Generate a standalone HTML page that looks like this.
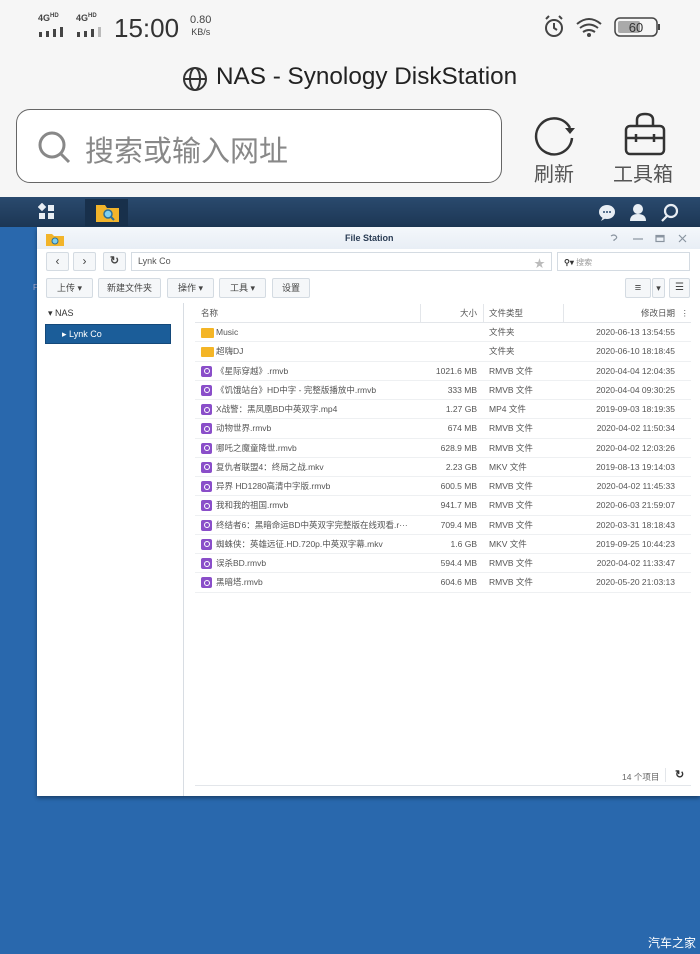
<!DOCTYPE html>
<html><head><meta charset="utf-8"><style>
*{margin:0;padding:0;box-sizing:border-box}
body{width:700px;height:954px;overflow:hidden;background:#f6f6f6;font-family:"Liberation Sans","Noto Sans CJK SC",sans-serif;position:relative}
.a{position:absolute}
.btn{position:absolute;top:278px;height:20px;border:1px solid #d4dbe2;border-radius:2px;background:#f5f7f9;font-size:9px;color:#444;text-align:center;line-height:18px}
.row{position:absolute;left:195px;width:496px;height:19.25px;border-bottom:1px solid #eef0f2;font-size:8.5px;color:#555;line-height:19px;white-space:nowrap}
.row span{position:absolute}
.ic{left:6px;top:4px;width:11px;height:11px;background:#8a4ec9;border-radius:2px}
.ic::after{content:"";position:absolute;left:2.5px;top:2.5px;width:4px;height:4px;border:1px solid #fff;border-radius:50%}
.fd{left:6px;top:5px;width:13px;height:10px;background:#f4b526;border-radius:1px}
</style></head><body>
<div class="a" style="left:38px;top:13px;font-size:9px;font-weight:bold;color:#444">4G<sup style="font-size:6px">HD</sup></div>
<div class="a" style="left:76px;top:13px;font-size:9px;font-weight:bold;color:#444">4G<sup style="font-size:6px">HD</sup></div>
<svg class="a" style="left:38px;top:26px" width="70" height="12"><g fill="#444"><rect x="1" y="6" width="3" height="5"/><rect x="8" y="5" width="3" height="6"/><rect x="15" y="3" width="3" height="8"/><rect x="22" y="1" width="3" height="10"/><rect x="39" y="6" width="3" height="5"/><rect x="46" y="5" width="3" height="6"/><rect x="53" y="3" width="3" height="8"/><rect x="60" y="1" width="3" height="10" fill="#bbb"/></g></svg>
<div class="a" style="left:114px;top:13px;font-size:26px;color:#333">15:00</div>
<div class="a" style="left:190px;top:14px;font-size:11px;color:#444;line-height:12px;text-align:center">0.80<br><span style="font-size:9px">KB/s</span></div>
<svg class="a" style="left:542px;top:14px" width="120" height="26"><g fill="none" stroke="#444" stroke-width="2"><circle cx="12" cy="14" r="8"/><path d="M12 9v5l3 2M4 5l3-3M20 5l-3-3"/><path d="M35 10q12-10 24 0M38 14q9-7 18 0M41 18q6-4 12 0"/></g><circle cx="47" cy="21" r="2" fill="#444"/><rect x="73" y="4" width="42" height="18" rx="5" fill="none" stroke="#444" stroke-width="1.5"/><rect x="76" y="7" width="22" height="12" rx="2" fill="#aaa"/><rect x="116" y="10" width="2" height="6" fill="#444"/><text x="94" y="18" font-size="13" fill="#333" text-anchor="middle" font-family="Liberation Sans">60</text></svg>
<svg class="a" style="left:181px;top:65px" width="28" height="28"><g fill="none" stroke="#333" stroke-width="2"><circle cx="14" cy="14" r="11"/><ellipse cx="14" cy="14" rx="5" ry="11"/><path d="M3 14h22"/></g></svg>
<div class="a" style="left:216px;top:63px;font-size:24.3px;color:#222">NAS - Synology DiskStation</div>
<div class="a" style="left:16px;top:109px;width:486px;height:74px;border:1px solid #666;border-radius:14px;background:#fff"></div>
<svg class="a" style="left:36px;top:129px" width="36" height="36"><g fill="none" stroke="#888" stroke-width="3"><circle cx="16" cy="16" r="12"/><path d="M25 25l8 8"/></g></svg>
<div class="a" style="left:85px;top:128px;font-size:29px;color:#888">搜索或输入网址</div>
<svg class="a" style="left:532px;top:112px" width="48" height="44"><g fill="none" stroke="#333" stroke-width="2.5"><path d="M38 16A18 18 0 1 0 40 26"/></g><path d="M33 16l5 6 5-6z" fill="#333"/></svg>
<div class="a" style="left:534px;top:158px;font-size:20px;color:#555">刷新</div>
<svg class="a" style="left:620px;top:110px" width="50" height="48"><g fill="none" stroke="#333" stroke-width="2.5"><rect x="6" y="16" width="38" height="28" rx="4"/><path d="M17 16V10q0-6 8-6t8 6v6M6 28h38M16 24v8M34 24v8"/></g></svg>
<div class="a" style="left:613px;top:158px;font-size:20px;color:#555">工具箱</div>
<div class="a" style="left:0;top:197px;width:700px;height:757px;background:#2968ad"></div>
<div class="a" style="left:0;top:197px;width:700px;height:30px;background:linear-gradient(#2a4a6e,#1c3654)"></div>
<div class="a" style="left:85px;top:199px;width:43px;height:27px;background:#18304b"></div>
<svg class="a" style="left:38px;top:203px" width="18" height="18"><g fill="#e8eef4"><rect x="1" y="1" width="6" height="6" transform="rotate(45 4 4)"/><rect x="10" y="2" width="6" height="6"/><rect x="1" y="10" width="6" height="6"/><rect x="10" y="10" width="6" height="6"/></g></svg>
<svg class="a" style="left:95px;top:202px" width="26" height="21"><path d="M1 3h9l2 3h12v14H1z" fill="#f2b42a"/><circle cx="13" cy="12" r="4" fill="#7fd0f0" stroke="#2b6f99" stroke-width="1.5"/><path d="M16 15l3 3" stroke="#2b6f99" stroke-width="2"/></svg>
<svg class="a" style="left:597px;top:203px" width="84" height="20"><ellipse cx="10" cy="9" rx="8" ry="7" fill="#e8eef4"/><path d="M6 14l-2 4 5-3z" fill="#e8eef4"/><g fill="#2a4a6e"><circle cx="7" cy="9" r="1"/><circle cx="10" cy="9" r="1"/><circle cx="13" cy="9" r="1"/></g><circle cx="41" cy="6" r="5" fill="#e8eef4"/><path d="M33 18q0-7 8-7t8 7z" fill="#e8eef4"/><g fill="none" stroke="#e8eef4" stroke-width="2.2"><circle cx="74" cy="8" r="6"/><path d="M70 13l-5 5"/></g></svg>
<div class="a" style="left:33px;top:283px;font-size:8px;color:#aac">F</div>
<div class="a" style="left:37px;top:227px;width:663px;height:569px;background:#fff;box-shadow:0 2px 4px rgba(0,0,0,.4)"></div>
<div class="a" style="left:37px;top:227px;width:663px;height:22px;background:linear-gradient(#f4f7fb,#e8eef5)"></div>
<svg class="a" style="left:45px;top:232px" width="20" height="15"><path d="M1 2h6l2 2h10v10H1z" fill="#f2b42a"/><circle cx="10" cy="9" r="3" fill="#7fd0f0" stroke="#2b6f99"/></svg>
<div class="a" style="left:345px;top:233px;font-size:9px;color:#2b3d55;font-weight:bold">File Station</div>
<svg class="a" style="left:606px;top:232px" width="84" height="14"><g fill="none" stroke="#8a94a0" stroke-width="1.2"><path d="M5 4q3-2 5 0t-2 4v1"/><path d="M27 7h10"/><rect x="50" y="3.5" width="8" height="6"/><path d="M50 4.5h8" stroke-width="2"/><path d="M73 3l7 7M80 3l-7 7"/></g></svg>
<div class="btn" style="left:46px;top:252px;width:23px;height:19px;line-height:17px;font-size:12px">‹</div>
<div class="btn" style="left:73px;top:252px;width:23px;height:19px;line-height:17px;font-size:12px">›</div>
<div class="btn" style="left:103px;top:252px;width:23px;height:19px;line-height:17px;font-size:11px;font-weight:bold">↻</div>
<div class="a" style="left:131px;top:252px;width:421px;height:19px;border:1px solid #d4dbe2;font-size:9px;color:#555;padding:3px 6px">Lynk Co<span style="position:absolute;right:6px;top:2px;color:#bbb;font-size:11px">★</span></div>
<div class="a" style="left:557px;top:252px;width:133px;height:19px;border:1px solid #d4dbe2;font-size:8px;color:#999;padding:4px 6px"><b style="color:#333">⚲▾</b> 搜索</div>
<div class="btn" style="left:46px;width:47px">上传 ▾</div>
<div class="btn" style="left:98px;width:63px">新建文件夹</div>
<div class="btn" style="left:167px;width:47px">操作 ▾</div>
<div class="btn" style="left:219px;width:47px">工具 ▾</div>
<div class="btn" style="left:272px;width:38px">设置</div>
<div class="btn" style="left:625px;width:26px;font-size:11px">≡</div>
<div class="btn" style="left:652px;width:13px">▾</div>
<div class="btn" style="left:669px;width:21px;font-size:10px">☰</div>
<div class="a" style="left:183px;top:303px;width:1px;height:493px;background:#d8dde3"></div>
<div class="a" style="left:48px;top:308px;font-size:9px;color:#333">▾ NAS</div>
<div class="a" style="left:45px;top:324px;width:126px;height:20px;background:#1b5d99;border:1px solid #14497a;color:#fff;font-size:9px;padding:4px 0 0 16px">▸ Lynk Co</div>
<div class="a" style="left:195px;top:304px;width:496px;height:19px;border-bottom:1px solid #e3e6ea;font-size:8.5px;color:#555;line-height:19px">
<span class="a" style="left:6px">名称</span><span class="a" style="left:225px;width:1px;height:19px;background:#e3e6ea"></span><span class="a" style="right:214px">大小</span><span class="a" style="left:288px;width:1px;height:19px;background:#e3e6ea"></span><span class="a" style="left:294px">文件类型</span><span class="a" style="left:368px;width:1px;height:19px;background:#e3e6ea"></span><span class="a" style="right:16px">修改日期</span><span class="a" style="right:2px">⋮</span></div>
<div class="row" style="top:323px"><span class="fd"></span><span style="left:21px">Music</span><span style="left:294px">文件夹</span><span style="right:16px">2020-06-13 13:54:55</span></div>
<div class="row" style="top:342.25px"><span class="fd"></span><span style="left:21px">超嗨DJ</span><span style="left:294px">文件夹</span><span style="right:16px">2020-06-10 18:18:45</span></div>
<div class="row" style="top:361.5px"><span class="ic"></span><span style="left:21px">《星际穿越》.rmvb</span><span style="right:214px">1021.6 MB</span><span style="left:294px">RMVB 文件</span><span style="right:16px">2020-04-04 12:04:35</span></div>
<div class="row" style="top:380.75px"><span class="ic"></span><span style="left:21px">《饥饿站台》HD中字 - 完整版播放中.rmvb</span><span style="right:214px">333 MB</span><span style="left:294px">RMVB 文件</span><span style="right:16px">2020-04-04 09:30:25</span></div>
<div class="row" style="top:400px"><span class="ic"></span><span style="left:21px">X战警：黑凤凰BD中英双字.mp4</span><span style="right:214px">1.27 GB</span><span style="left:294px">MP4 文件</span><span style="right:16px">2019-09-03 18:19:35</span></div>
<div class="row" style="top:419.25px"><span class="ic"></span><span style="left:21px">动物世界.rmvb</span><span style="right:214px">674 MB</span><span style="left:294px">RMVB 文件</span><span style="right:16px">2020-04-02 11:50:34</span></div>
<div class="row" style="top:438.5px"><span class="ic"></span><span style="left:21px">哪吒之魔童降世.rmvb</span><span style="right:214px">628.9 MB</span><span style="left:294px">RMVB 文件</span><span style="right:16px">2020-04-02 12:03:26</span></div>
<div class="row" style="top:457.75px"><span class="ic"></span><span style="left:21px">复仇者联盟4：终局之战.mkv</span><span style="right:214px">2.23 GB</span><span style="left:294px">MKV 文件</span><span style="right:16px">2019-08-13 19:14:03</span></div>
<div class="row" style="top:477px"><span class="ic"></span><span style="left:21px">异界 HD1280高清中字版.rmvb</span><span style="right:214px">600.5 MB</span><span style="left:294px">RMVB 文件</span><span style="right:16px">2020-04-02 11:45:33</span></div>
<div class="row" style="top:496.25px"><span class="ic"></span><span style="left:21px">我和我的祖国.rmvb</span><span style="right:214px">941.7 MB</span><span style="left:294px">RMVB 文件</span><span style="right:16px">2020-06-03 21:59:07</span></div>
<div class="row" style="top:515.5px"><span class="ic"></span><span style="left:21px">终结者6：黑暗命运BD中英双字完整版在线观看.r···</span><span style="right:214px">709.4 MB</span><span style="left:294px">RMVB 文件</span><span style="right:16px">2020-03-31 18:18:43</span></div>
<div class="row" style="top:534.75px"><span class="ic"></span><span style="left:21px">蜘蛛侠：英雄远征.HD.720p.中英双字幕.mkv</span><span style="right:214px">1.6 GB</span><span style="left:294px">MKV 文件</span><span style="right:16px">2019-09-25 10:44:23</span></div>
<div class="row" style="top:554px"><span class="ic"></span><span style="left:21px">误杀BD.rmvb</span><span style="right:214px">594.4 MB</span><span style="left:294px">RMVB 文件</span><span style="right:16px">2020-04-02 11:33:47</span></div>
<div class="row" style="top:573.25px"><span class="ic"></span><span style="left:21px">黑暗塔.rmvb</span><span style="right:214px">604.6 MB</span><span style="left:294px">RMVB 文件</span><span style="right:16px">2020-05-20 21:03:13</span></div>
<div class="a" style="left:195px;top:785px;width:496px;height:1px;background:#e3e6ea"></div>
<div class="a" style="left:622px;top:771px;font-size:8.5px;color:#666">14 个项目</div>
<div class="a" style="left:665px;top:768px;width:1px;height:14px;background:#e3e6ea"></div>
<div class="a" style="left:675px;top:768px;font-size:11px;color:#333;font-weight:bold">↻</div>
<div class="a" style="left:648px;top:934px;font-size:12px;color:#fff">汽车之家</div>
</body></html>
